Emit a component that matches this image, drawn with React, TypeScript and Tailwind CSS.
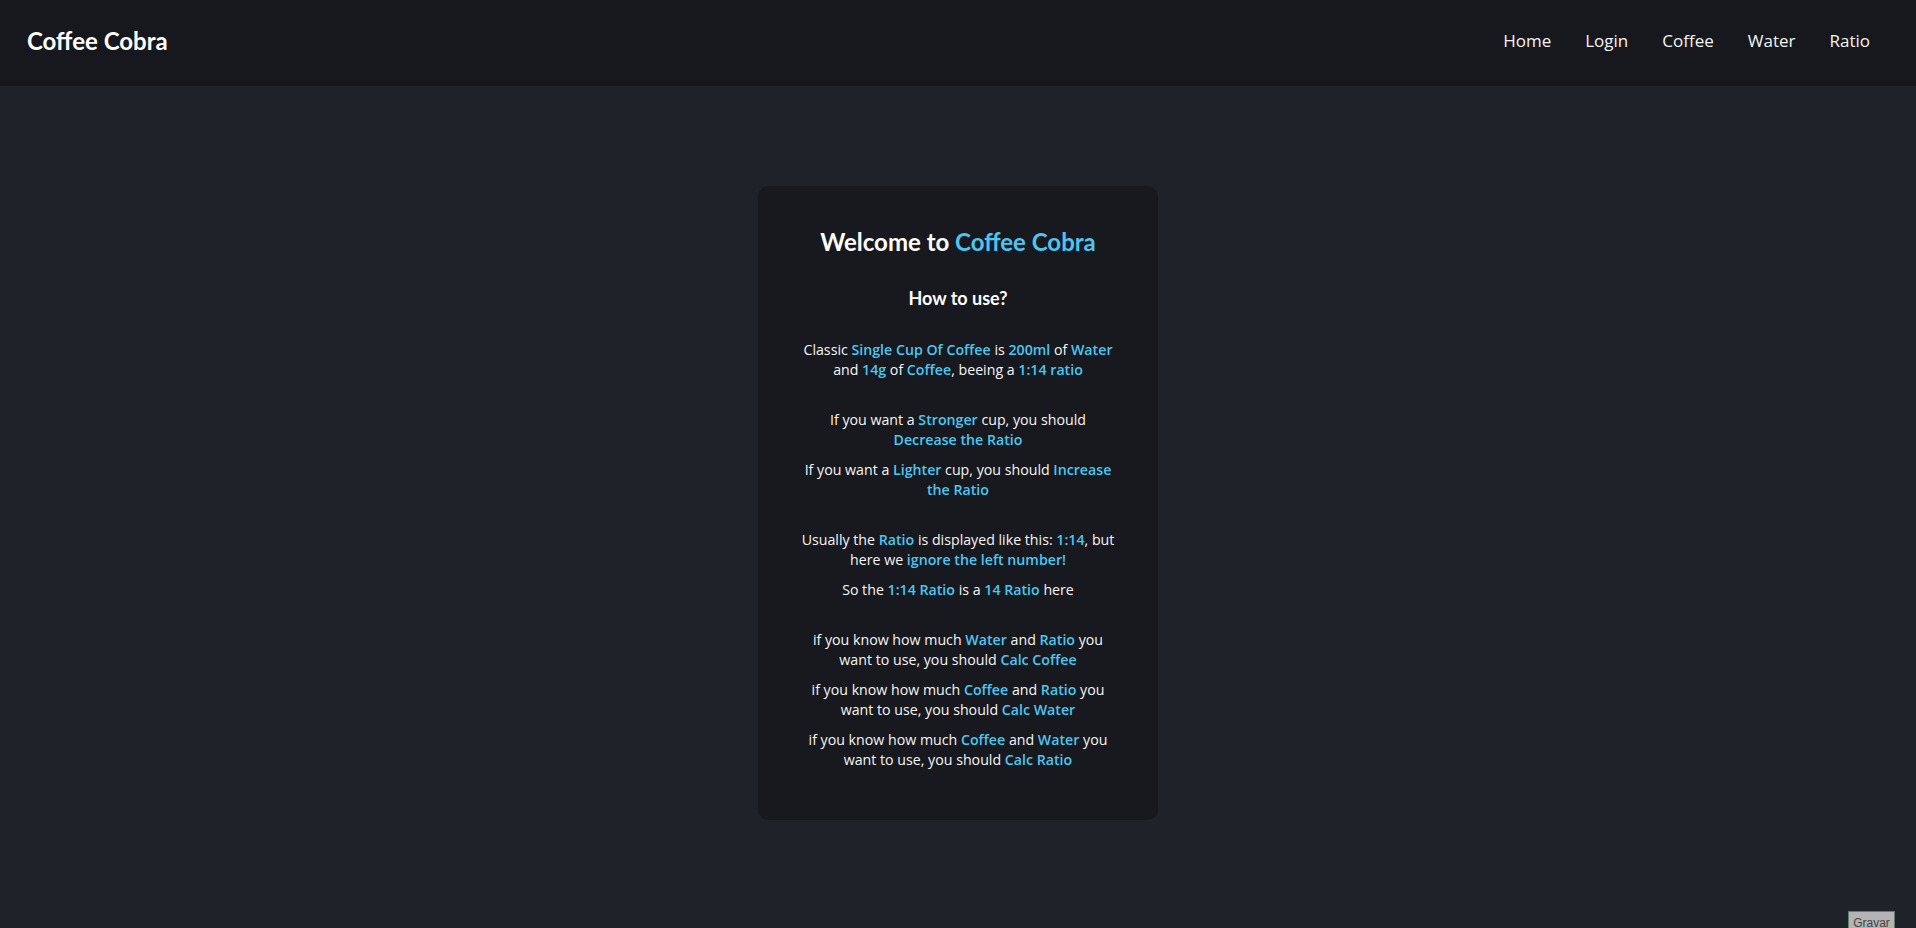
import React from "react";

const C = ({ children }: { children: React.ReactNode }) => (
  <span className="font-semibold text-[#4cc6f0]">{children}</span>
);

export default function App() {
  return (
    <div className="relative h-[928px] overflow-hidden bg-[#20222a] text-white font-['Open_Sans',sans-serif]">
      <nav className="flex h-[86px] items-center justify-between bg-[#17181d] pb-[5px] pl-[27px] pr-[46px]">
        <div className="font-['Lato',sans-serif] text-[24px] font-bold leading-none text-white">Coffee Cobra</div>
        <ul className="mb-[1px] flex items-center gap-[34px] text-[17px] leading-none text-[#f3f3f3]">
          <li>Home</li>
          <li>Login</li>
          <li>Coffee</li>
          <li>Water</li>
          <li>Ratio</li>
        </ul>
      </nav>

      <main className="flex justify-center pt-[100px]">
        <div className="flex h-[634px] w-[400px] flex-col items-center rounded-[10px] bg-[#18191e] px-[40px] pt-[40px] text-center">
          <h1 className="font-['Lato',sans-serif] text-[24px] font-bold leading-[32px]">
            Welcome to <span className="text-[#4cc6f0]">Coffee Cobra</span>
          </h1>
          <h2 className="mt-[26px] font-['Lato',sans-serif] text-[18px] font-bold leading-[28px]">How to use?</h2>

          <div className="mt-[28px] flex flex-col gap-[30px] text-[14.2px] leading-[20px] text-[#f5f5f5]">
            <p>
              Classic <C>Single Cup Of Coffee</C> is <C>200ml</C> of <C>Water</C>
              <br />
              and <C>14g</C> of <C>Coffee</C>, beeing a <C>1:14 ratio</C>
            </p>

            <div className="flex flex-col gap-[10px]">
              <p>
                If you want a <C>Stronger</C> cup, you should
                <br />
                <C>Decrease the Ratio</C>
              </p>
              <p>
                If you want a <C>Lighter</C> cup, you should <C>Increase</C>
                <br />
                <C>the Ratio</C>
              </p>
            </div>

            <div className="flex flex-col gap-[10px]">
              <p>
                Usually the <C>Ratio</C> is displayed like this: <C>1:14</C>, but
                <br />
                here we <C>ignore the left number!</C>
              </p>
              <p>
                So the <C>1:14 Ratio</C> is a <C>14 Ratio</C> here
              </p>
            </div>

            <div className="flex flex-col gap-[10px]">
              <p>
                if you know how much <C>Water</C> and <C>Ratio</C> you
                <br />
                want to use, you should <C>Calc Coffee</C>
              </p>
              <p>
                if you know how much <C>Coffee</C> and <C>Ratio</C> you
                <br />
                want to use, you should <C>Calc Water</C>
              </p>
              <p>
                if you know how much <C>Coffee</C> and <C>Water</C> you
                <br />
                want to use, you should <C>Calc Ratio</C>
              </p>
            </div>
          </div>
        </div>
      </main>

      <button className="absolute left-[1848px] top-[911px] h-[24px] w-[47px] border border-[#5f7f6e] bg-[#b4b4b4] font-['Liberation_Sans',sans-serif] text-[12px] text-[#444]">
        Gravar
      </button>
    </div>
  );
}
